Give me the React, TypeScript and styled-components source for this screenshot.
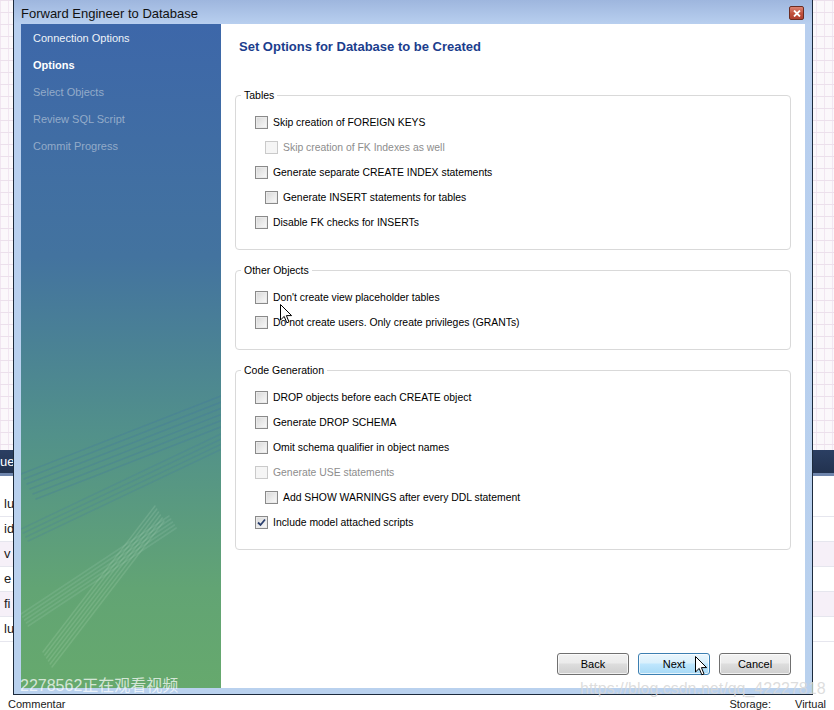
import styled, { createGlobalStyle } from "styled-components";

const GlobalStyle = createGlobalStyle`
  html, body {
    margin: 0;
    padding: 0;
    background: #ffffff;
  }
  body {
    font-family: "Liberation Sans", Arial, sans-serif;
  }
`;

const Desktop = styled.div`
  position: relative;
  width: 834px;
  height: 710px;
  overflow: hidden;
  display: grid;
  grid-template-rows: 450px 26px 1fr 14px;
  background: #ffffff;
`;

const GridArea = styled.div`
  background-color: #fbf8fb;
  background-image: linear-gradient(#ece0ec 1px, transparent 1px),
    linear-gradient(90deg, #f1e6f1 1px, transparent 1px);
  background-size: 100% 12px, 8px 100%;
`;

const NavBar = styled.div`
  background: linear-gradient(#2b3f63, #22324f);
  border-bottom: 3px solid #6f86ad;
  color: #ffffff;
  font-size: 13px;
  line-height: 23px;
`;

const ListArea = styled.div`
  display: flex;
  flex-direction: column;
  padding-top: 16px;
  background: #ffffff;
`;

const ListRow = styled.div<{ $tint?: boolean }>`
  height: 24px;
  line-height: 24px;
  font-size: 13px;
  padding-left: 4px;
  color: #202020;
  border-bottom: 1px solid #e6e6ee;
  background: ${(p) => (p.$tint ? "#f6f0f8" : "#ffffff")};
`;

const BottomRow = styled.div`
  display: flex;
  align-items: flex-end;
  gap: 24px;
  font-size: 11px;
  line-height: 12px;
  color: #202020;
  padding: 0 8px;
`;

const BottomSpacer = styled.span`
  flex: 1;
`;

const Window = styled.div`
  position: absolute;
  left: 13px;
  top: 0;
  width: 800px;
  height: 695px;
  box-sizing: border-box;
  display: flex;
  flex-direction: column;
  padding: 0 7px 6px 7px;
  border: 1px solid #1c2a3c;
  border-top: none;
  background: linear-gradient(#9eb6de 0px, #b8cfef 24px, #b9d1ee 100%);
`;

const TitleBar = styled.div`
  height: 24px;
  display: flex;
  align-items: center;
  justify-content: space-between;
`;

const Title = styled.span`
  font-size: 13px;
  color: #111111;
  padding-top: 2px;
`;

const CloseButton = styled.div`
  width: 15px;
  height: 14px;
  margin-right: 1px;
  margin-top: 2px;
  box-sizing: border-box;
  border: 1px solid #6b2c22;
  border-radius: 2px;
  background: linear-gradient(#dc8474, #c0503c 55%, #b04030);
  display: flex;
  align-items: center;
  justify-content: center;
`;

const Body = styled.div`
  flex: 1;
  display: flex;
  min-height: 0;
`;

const Sidebar = styled.div`
  position: relative;
  width: 200px;
  display: flex;
  flex-direction: column;
  padding-top: 1px;
  background: linear-gradient(
    180deg,
    #3d67a9 0%,
    #43739f 35%,
    #52918a 62%,
    #62a474 85%,
    #66a96d 100%
  );
  overflow: hidden;
`;

const Streaks = styled.svg`
  position: absolute;
  left: 0;
  top: 0;
`;

const SideItem = styled.div<{ $state: "done" | "current" | "todo" }>`
  position: relative;
  height: 27px;
  line-height: 27px;
  padding-left: 12px;
  font-size: 11px;
  font-weight: ${(p) => (p.$state === "current" ? "bold" : "normal")};
  color: ${(p) =>
    p.$state === "todo" ? "#93abc9" : p.$state === "current" ? "#ffffff" : "#eef3f8"};
`;

const Main = styled.div`
  flex: 1;
  background: #ffffff;
  display: flex;
  flex-direction: column;
  padding: 15px 14px 13px 14px;
`;

const Heading = styled.h1`
  margin: 0 0 33px 4px;
  font-size: 13px;
  line-height: 16px;
  font-weight: bold;
  color: #1b3d8d;
`;

const Group = styled.fieldset`
  margin: 0 0 13px 0;
  padding: 7.5px 0 14.5px 0;
  border: 1px solid #d9d9d9;
  border-radius: 4px;
  min-width: 0;
`;

const Legend = styled.legend`
  margin-left: 5px;
  padding: 0 3px;
  font-size: 10.5px;
  line-height: 14px;
  color: #000000;
`;

const OptionRow = styled.div<{ $indent?: boolean; $disabled?: boolean }>`
  height: 25px;
  display: flex;
  align-items: center;
  gap: 5px;
  padding-left: ${(p) => (p.$indent ? "29px" : "19px")};
  font-size: 10.4px;
  color: ${(p) => (p.$disabled ? "#8d8d8d" : "#000000")};
`;

const Box = styled.span<{ $disabled?: boolean }>`
  width: 13px;
  height: 13px;
  box-sizing: border-box;
  flex: none;
  display: flex;
  align-items: center;
  justify-content: center;
  border: 1px solid ${(p) => (p.$disabled ? "#cacaca" : "#8a8a8a")};
  background: ${(p) =>
    p.$disabled
      ? "#f5f5f5"
      : "linear-gradient(135deg, #d6d6d6 0%, #e9e9e9 50%, #fafafa 100%)"};
  box-shadow: ${(p) => (p.$disabled ? "none" : "inset 0 0 0 1px #eaeaea")};
`;

const ButtonRow = styled.div`
  margin-top: auto;
  display: flex;
  justify-content: flex-end;
  gap: 9px;
`;

const Button = styled.button<{ $primary?: boolean }>`
  width: 72px;
  height: 22px;
  padding: 0;
  font-family: "Liberation Sans", Arial, sans-serif;
  font-size: 11px;
  color: #000000;
  border-radius: 3px;
  border: 1px solid ${(p) => (p.$primary ? "#3c7fb1" : "#707070")};
  background: ${(p) =>
    p.$primary
      ? "linear-gradient(#eaf6fd 0%, #d9f0fc 45%, #bee6fd 50%, #a7d9f5 100%)"
      : "linear-gradient(#f2f2f2 0%, #ebebeb 45%, #dddddd 50%, #cfcfcf 100%)"};
  box-shadow: inset 0 0 0 1px rgba(255, 255, 255, 0.7);
`;

const Cursor = styled.svg<{ $x: number; $y: number }>`
  position: absolute;
  left: ${(p) => p.$x}px;
  top: ${(p) => p.$y}px;
`;

const Watermark = styled.div<{ $x: number; $y: number; $size: number; $color: string }>`
  position: absolute;
  left: ${(p) => p.$x}px;
  top: ${(p) => p.$y}px;
  font-family: "Liberation Sans", "Noto Sans CJK SC", sans-serif;
  font-size: ${(p) => p.$size}px;
  line-height: ${(p) => p.$size}px;
  color: ${(p) => p.$color};
  white-space: nowrap;
  pointer-events: none;
`;

type Option = { label: string; indent?: boolean; disabled?: boolean; checked?: boolean };

const tables: Option[] = [
  { label: "Skip creation of FOREIGN KEYS" },
  { label: "Skip creation of FK Indexes as well", indent: true, disabled: true },
  { label: "Generate separate CREATE INDEX statements" },
  { label: "Generate INSERT statements for tables", indent: true },
  { label: "Disable FK checks for INSERTs" },
];

const others: Option[] = [
  { label: "Don't create view placeholder tables" },
  { label: "Do not create users. Only create privileges (GRANTs)" },
];

const codeGen: Option[] = [
  { label: "DROP objects before each CREATE object" },
  { label: "Generate DROP SCHEMA" },
  { label: "Omit schema qualifier in object names" },
  { label: "Generate USE statements", disabled: true },
  { label: "Add SHOW WARNINGS after every DDL statement", indent: true },
  { label: "Include model attached scripts", checked: true },
];

const steps: { label: string; state: "done" | "current" | "todo" }[] = [
  { label: "Connection Options", state: "done" },
  { label: "Options", state: "current" },
  { label: "Select Objects", state: "todo" },
  { label: "Review SQL Script", state: "todo" },
  { label: "Commit Progress", state: "todo" },
];

// streak bundles in sidebar coordinates: start, end, colour, line count, spacing
const bundles = [
  { x1: 0, y1: 450, x2: 200, y2: 372, color: "rgba(60,110,170,0.22)", count: 6, gap: 5 },
  { x1: 0, y1: 505, x2: 200, y2: 410, color: "rgba(60,110,170,0.18)", count: 4, gap: 4 },
  { x1: 0, y1: 590, x2: 148, y2: 492, color: "rgba(200,235,215,0.13)", count: 5, gap: 3 },
  { x1: 22, y1: 628, x2: 134, y2: 482, color: "rgba(215,240,215,0.15)", count: 6, gap: 3 },
];

const Check = ({ option }: { option: Option }) => (
  <OptionRow $indent={option.indent} $disabled={option.disabled}>
    <Box $disabled={option.disabled}>
      {option.checked && (
        <svg width="9" height="9" viewBox="0 0 9 9">
          <path d="M1 4.5 L3.5 7 L8 1.5" fill="none" stroke="#2a3f6e" strokeWidth="1.8" />
        </svg>
      )}
    </Box>
    {option.label}
  </OptionRow>
);

const Arrow = ({ x, y }: { x: number; y: number }) => (
  <Cursor $x={x} $y={y} width="13" height="21" viewBox="0 0 13 21">
    <path
      d="M0.5 0.5 L0.5 16 L4.2 12.4 L6.8 18.8 L9 17.9 L6.4 11.6 L11.6 11.6 Z"
      fill="#ffffff"
      stroke="#000000"
      strokeWidth="1"
      strokeLinejoin="round"
    />
  </Cursor>
);

const App = () => {
  return (
    <>
      <GlobalStyle />
      <Desktop>
        <GridArea />
        <NavBar>ue -</NavBar>
        <ListArea>
          <ListRow>lum</ListRow>
          <ListRow>id</ListRow>
          <ListRow $tint>v</ListRow>
          <ListRow>e</ListRow>
          <ListRow $tint>fi</ListRow>
          <ListRow>lum</ListRow>
        </ListArea>
        <BottomRow>
          <span>Commentar</span>
          <BottomSpacer />
          <span>Storage:</span>
          <span>Virtual</span>
        </BottomRow>

        <Window>
          <TitleBar>
            <Title>Forward Engineer to Database</Title>
            <CloseButton>
              <svg width="8" height="7" viewBox="0 0 8 7">
                <path d="M1 0.5 L7 6.5 M7 0.5 L1 6.5" stroke="#ffffff" strokeWidth="1.8" />
              </svg>
            </CloseButton>
          </TitleBar>
          <Body>
            <Sidebar>
              <Streaks width="200" height="664" viewBox="0 0 200 664">
                {bundles.map((b, bi) => (
                  <g key={bi} stroke={b.color} strokeWidth="1.5" strokeLinecap="round">
                    {Array.from({ length: b.count }).map((_, i) => (
                      <line
                        key={i}
                        x1={b.x1 + i * b.gap * 0.6}
                        y1={b.y1 + i * b.gap}
                        x2={b.x2 + i * b.gap * 0.6}
                        y2={b.y2 + i * b.gap}
                      />
                    ))}
                  </g>
                ))}
              </Streaks>
              {steps.map((s) => (
                <SideItem key={s.label} $state={s.state}>
                  {s.label}
                </SideItem>
              ))}
            </Sidebar>
            <Main>
              <Heading>Set Options for Database to be Created</Heading>
              <Group>
                <Legend>Tables</Legend>
                {tables.map((o) => (
                  <Check key={o.label} option={o} />
                ))}
              </Group>
              <Group>
                <Legend>Other Objects</Legend>
                {others.map((o) => (
                  <Check key={o.label} option={o} />
                ))}
              </Group>
              <Group>
                <Legend>Code Generation</Legend>
                {codeGen.map((o) => (
                  <Check key={o.label} option={o} />
                ))}
              </Group>
              <ButtonRow>
                <Button>Back</Button>
                <Button $primary>Next</Button>
                <Button>Cancel</Button>
              </ButtonRow>
            </Main>
          </Body>
        </Window>

        <Arrow x={280} y={304} />
        <Arrow x={695} y={656} />
        <Watermark $x={20} $y={678} $size={16} $color="rgba(255,255,255,0.72)">
          2278562正在观看视频
        </Watermark>
        <Watermark $x={580} $y={681} $size={16} $color="rgba(215,215,215,0.85)">
          https://blog.csdn.net/qq_42227818
        </Watermark>
      </Desktop>
    </>
  );
};

export default App;
